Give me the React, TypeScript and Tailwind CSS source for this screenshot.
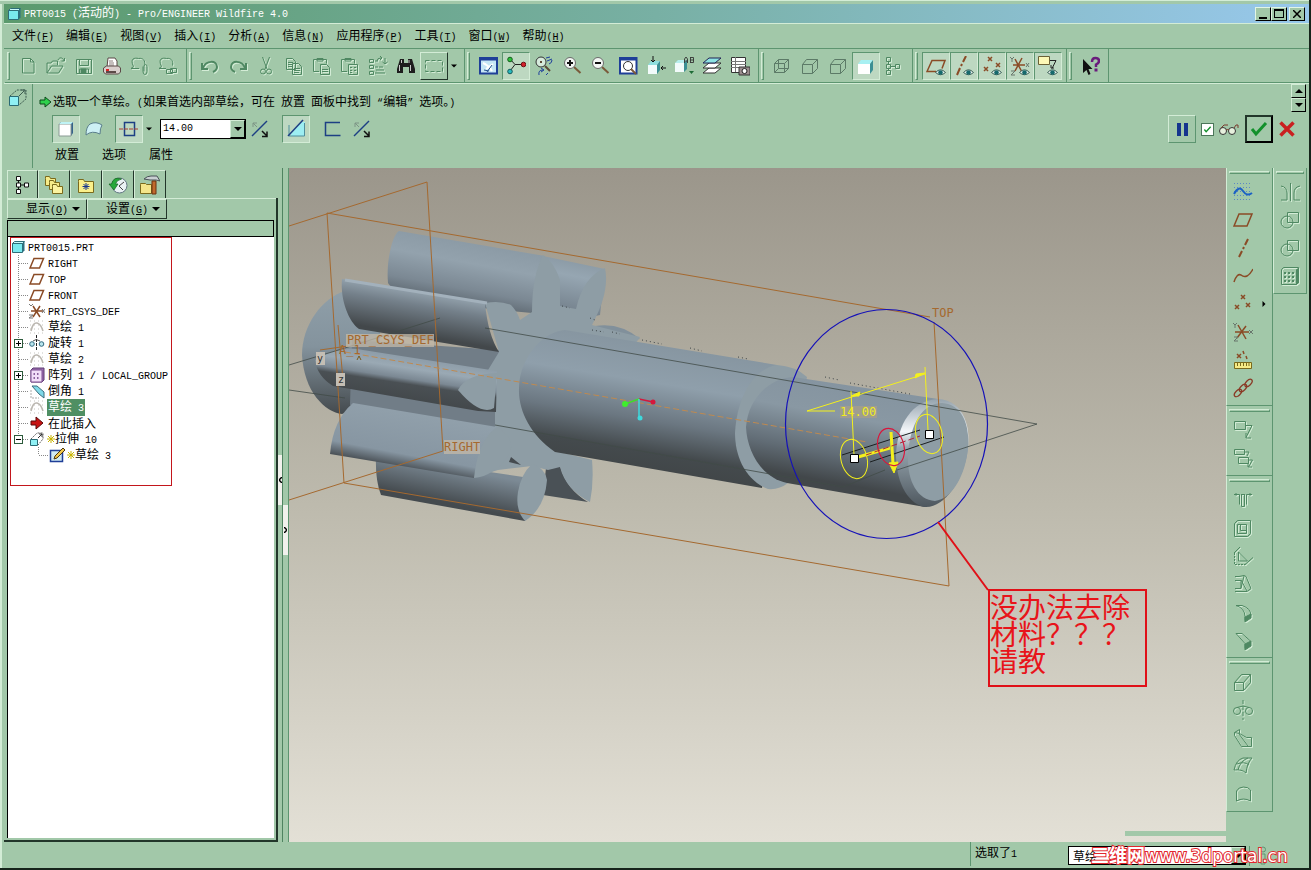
import type { ReactNode } from "react";

const DISABLED = "text-[#4f8862] drop-shadow-[1px_1px_0_#d3ecd6]";

function Mixed({ children }: { children: string }) {
  return (
    <span>
      {children.split(/([\x20-\x7e“”]+)/).map((part, i) =>
        /^[\x20-\x7e“”]/.test(part) ? (
          <span key={i} className="whitespace-pre font-['Liberation_Mono',monospace] text-[10px]">
            {part}
          </span>
        ) : (
          part
        ),
      )}
    </span>
  );
}

const eye = (
  <g>
    <path d="M9.500 16.500q5-5.500 10 0q-5 4.500-10 0" fill="#e8f1ec" stroke="#3d6258" />
    <circle cx="14.500" cy="16.500" r="2.300" fill="#16696c" stroke="none" />
  </g>
);

const lens = <path d="M12 11l6.500 6" stroke="#7a5a3a" strokeWidth="2" />;

const icons: Record<string, ReactNode> = {
  new: <path d="M4.500 2.500h8l3.500 3.500v11h-11.500zM12.500 2.500v3.500h3.500" />,
  open: <path d="M1 17v-10h4l1.500-2h5v4M1 17h11.500l4.500-7h-11.500zM12 4c1-3 5-3 6 1M18.500 2v3h-3" />,
  save: (
    <>
      <path d="M2.500 3.500h15v14h-15zM5.500 3.500v6h9v-6M5.500 17v-4h9v4" />
      <path d="M7 13h5v4h-5z" fill="currentColor" />
    </>
  ),
  print: (
    <>
      <path d="M5 11l1-9h7l2 3v6z" fill="#fff" stroke="#5c4a48" />
      <path d="M7 5h4M7 7h5M7 9h5" stroke="#8c7f7d" />
      <path d="M1.500 12l3-2h12l2 2v4l-2 2h-13l-2-2z" fill="#d9cfcd" stroke="#5c4a48" />
      <path d="M4 16h10" stroke="#5c4a48" strokeWidth="2" />
      <path d="M4 14h3" stroke="#d22" strokeWidth="2" />
    </>
  ),
  mail: <path d="M9 12.500h-8l2.500-2c-4-8 1-9 5-8c5-1 7 3 6 6M13 10.500v5q0 3 2 3t2-3v-5q0-2-1.500-2t-1.500 2v5" />,
  link: <path d="M8 12.500h-7l2.500-2c-4-8 1-9 5-8c5-1 7 3 6 7M8.500 13.500h6v4h-6zM12.500 12.500h6v4h-6z" />,
  undo: <path d="M2 7v6h6M3 12c3-8 14-8 14-1q0 3-4 5" strokeWidth="2" />,
  redo: <path d="M18 7v6h-6M17 12c-3-8-14-8-14-1q0 3 4 5" strokeWidth="2" />,
  cut: (
    <>
      <path d="M6.500 1l4.500 12M13.500 1l-4.500 12" />
      <circle cx="7" cy="15.500" r="2.500" />
      <circle cx="13" cy="15.500" r="2.500" />
    </>
  ),
  copy: <path d="M2.500 2.500h6l3 3v8h-9zM4 6.500h5M4 8.500h5M4 10.500h4M8.500 7.500h6l3 3v8h-9zM10 12.500h6M10 14.500h6M10 16.500h5" />,
  paste: <path d="M7 15.500h-5.500v-12h13v4M5 5v-2.500h6v2.500zM8.500 8.500h6l3 3v7h-9zM10 13.500h6M10 15.500h6" />,
  pasteSpecial: <path d="M7 15.500h-5.500v-12h13v4M5 5v-2.500h6v2.500zM8.500 8.500h9v10h-9zM10 11.500h2M14 11.500h2M10 14.500h2M14 14.500h2M10 16.500h2" />,
  regen: <path d="M1.500 3.500h4v3h-4zM1.500 9.500h4v3h-4zM1.500 15.500h4v3h-4zM7 5h3M7 11h3M7 17h10M8 14h8M9 5q0-3 4-3M12 0l2 2l-2 2M17 2v6M14.500 6l2.500 2l2.500-2M15 11h-4" />,
  find: (
    <>
      <path d="M4 3h4v4h4v-4h4l3 10v4h-6v-6h-6v6h-6v-4z" fill="#1d1d1d" stroke="none" />
      <path d="M3.500 9v6M14.500 9v6M5.500 4v3M13 4v3" stroke="#c9c9c9" />
    </>
  ),
  select: <path d="M1.500 4.500h17v11h-17z" strokeDasharray="4 2" />,
  repaint: (
    <>
      <path d="M2 2h17v15.500h-17z" fill="#c6e6f5" stroke="#1f3f98" strokeWidth="2" />
      <path d="M2 3h17" stroke="#1f3f98" strokeWidth="3" />
      <path d="M5 7q5 2 9 8M8 13l7-5" stroke="#fff" strokeWidth="2" />
      <path d="M9 16l5-7M6 14l5 1" stroke="#27518e" />
    </>
  ),
  spin: (
    <>
      <path d="M4 3l5 5.500h8M9 8.500l-5 6.500" stroke="#222" />
      <circle cx="4" cy="3.500" r="2.300" fill="#2bc23c" stroke="#165c1c" />
      <circle cx="17.500" cy="8.500" r="2.300" fill="#d3202c" stroke="#6e0f14" />
      <circle cx="4" cy="15.500" r="2.300" fill="#28b9bd" stroke="#145a5c" />
    </>
  ),
  viewMode: (
    <>
      <circle cx="7" cy="6" r="5" fill="#d6eadc" stroke="#333" />
      <path d="M7 5v2M11 10l5 5" stroke="#5c4a38" strokeWidth="2" />
      <path d="M12 2l4-1M13 5l5-2M15 8q3-1 3-4M5 19q-1-5 4-5M7 12l3 2l-3 2M12 19l2-2" stroke="#1e3f9b" />
    </>
  ),
  zoomIn: (
    <>
      {lens}
      <circle cx="8" cy="7" r="5.500" fill="#f3f7f4" stroke="#6b6b6b" />
      <path d="M5 7h6M8 4v6" stroke="#111" strokeWidth="2" />
    </>
  ),
  zoomOut: (
    <>
      {lens}
      <circle cx="8" cy="7" r="5.500" fill="#f3f7f4" stroke="#6b6b6b" />
      <path d="M5 7h6" stroke="#111" strokeWidth="2" />
    </>
  ),
  refit: (
    <>
      <path d="M2 2h16.500v15.500h-16.500z" fill="#fff" stroke="#1f3f98" strokeWidth="2" />
      <path d="M2 3h16" stroke="#1f3f98" strokeWidth="3" />
      <circle cx="10" cy="10" r="4.500" stroke="#333" />
      <path d="M13 13l5 5" stroke="#7a5a3a" strokeWidth="2" />
    </>
  ),
  orient: (
    <>
      <path d="M2 9h9v9h-9z" fill="#f2fbfb" stroke="none" />
      <path d="M2 9l3-4h9l-3 4z" fill="#8fdede" stroke="none" />
      <path d="M11 9l3-4v9l-3 4z" fill="#3b8f94" stroke="none" />
      <path d="M7 0v5M5 4l2 2l2-2M20 12h-5M17 10l-2 2l2 2" stroke="#111" />
    </>
  ),
  saved: (
    <>
      <path d="M1 7h9v9h-9z" fill="#f2fbfb" stroke="none" />
      <path d="M1 7l3-3h9l-3 3z" fill="#b7eeee" stroke="none" />
      <path d="M10 7l3-3v9l-3 3z" fill="#3b8f94" stroke="none" />
      <path d="M10.500 7v-4l1.500-2l1.500 2v4M10.500 5h3M16.500 1v6M16.500 1.500h3v5h-3M16.500 4h3" stroke="#333" strokeWidth=".9" />
      <path d="M15 15h5l-2.500 3z" fill="#1d6b35" stroke="none" />
    </>
  ),
  layers: (
    <>
      <path d="M1 17l6-5h12l-6 5z" fill="#fff" stroke="#333" />
      <path d="M1 12l6-5h12l-6 5z" fill="#fff" stroke="#333" />
      <path d="M1 7l6-5h12l-6 5z" fill="#8de3e3" stroke="#225" />
    </>
  ),
  viewMgr: (
    <>
      <path d="M1.500 1.500h14v15h-14z" fill="#fff" stroke="#333" />
      <path d="M1 5.500h15M1 8.500h15M1 11.500h15M5.500 1v15" stroke="#777" />
      <path d="M9 11h11v8h-11z" fill="#9d8f90" stroke="#333" />
      <circle cx="14.500" cy="15" r="2.500" fill="#fff" stroke="#222" />
    </>
  ),
  wire: <path d="M2.500 7.500h10v9h-10zM6.500 3.500h10v9h-10zM2.500 7.500l4-4M12.500 7.500l4-4M2.500 16.500l4-4M12.500 16.500l4-4" stroke="#5c7a67" />,
  hidden: <path d="M2.500 8.500h10v9h-10zM2.500 8.500l4-5h11v9l-5 5M12.500 8.500l5-5" stroke="#5c7a67" />,
  shaded: (
    <>
      <path d="M2 8h12v10h-12z" fill="#fff" stroke="none" />
      <path d="M2 8l3-4h12l-3 4z" fill="#a8f0f2" stroke="none" />
      <path d="M14 8l3-4v10l-3 4z" fill="#3b8f94" stroke="none" />
    </>
  ),
  tree: <path d="M2.500 1.500h4v4h-4zM2.500 8.500h4v4h-4zM2.500 14.500h4v4h-4zM11.500 8.500h4v4h-4zM4.500 6v2M4.500 12v2M7 10.500h4" />,
  plane: <path d="M6 4h13l-5 12h-13z" stroke="#8a4b26" strokeWidth="1.500" />,
  planeEye: (
    <>
      <path d="M10 15.500h-9l5-11h13l-3 8" stroke="#8a4b26" strokeWidth="1.500" />
      {eye}
    </>
  ),
  axis: <path d="M15 1l-3 6M11 9l-1 2M9 13l-3 6" stroke="#8a4b26" strokeWidth="2" />,
  axisEye: (
    <>
      <path d="M12 0l-3 6M8 8l-1 2M6 12l-3 7" stroke="#8a4b26" strokeWidth="2" />
      {eye}
    </>
  ),
  points: <path d="M8 1l4 4M12 1l-4 4M2 11l4 4M6 11l-4 4M13 9l4 4M17 9l-4 4" stroke="#8a4b26" strokeWidth="1.500" />,
  pointsEye: (
    <>
      <path d="M6 1l4 4M10 1l-4 4M2 11l4 4M6 11l-4 4M14 7l4 4M18 7l-4 4" stroke="#8a4b26" strokeWidth="1.500" />
      {eye}
    </>
  ),
  csys: (
    <>
      <path d="M2 10h14M5 3l8 14M13 4l-9 12" stroke="#8a4b26" strokeWidth="1.500" />
      <path d="M0 1l2 2l2-2M2 3v3M16 8l4 4M20 8l-4 4M1 15h4l-4 4h4" stroke="#68766c" />
    </>
  ),
  csysEye: (
    <>
      <path d="M3 9h12M5 3l7 13M12 2l-7 13" stroke="#8a4b26" strokeWidth="1.500" />
      <path d="M0 1l2 2l2-2M2 3v3M16 7l3 4M19 7l-3 4M1 15h4l-4 4h4" stroke="#68766c" />
      {eye}
    </>
  ),
  noteEye: (
    <>
      <path d="M.5 .500h11v8h-11z" fill="#fdf8b6" stroke="#6b6136" />
      <path d="M12 4.500h6l-4 8M13 9v3h3" stroke="#222" />
      {eye}
    </>
  ),
  help: (
    <>
      <path d="M3 3v14l3.500-3l2 5l2-1l-2-5h4z" fill="#111" stroke="none" />
      <path d="M12 6q0-4 3.500-4t3.500 3q0 2-3 3.500v2.500" stroke="#6a1b7c" strokeWidth="2.500" />
      <path d="M14.500 12.500h3v3h-3z" fill="#6a1b7c" stroke="none" />
    </>
  ),
  extrude: (
    <>
      <path d="M1.500 8.500h9v9h-9z" fill="#8ff0f4" stroke="#2a6a74" />
      <path d="M2 8l7-6h9v9l-7 6" stroke="#3d5c50" strokeDasharray="2 1" />
      <path d="M11 8l5-5M13 2h4v4" stroke="#3d5c50" />
    </>
  ),
  solid: (
    <>
      <path d="M3 5l2-2h12v11l-2 3h-12z" fill="#35618a" stroke="none" />
      <path d="M3 5h12v12h-12z" fill="#fff" stroke="#8a9a94" />
      <path d="M3 5l2-2h12l-2 2z" fill="#bff3f5" stroke="none" />
    </>
  ),
  surface: <path d="M2 16q0-8 4-11q6-3 12 1q-2 3-2 9q-8-4-14 1z" fill="#cdf0f4" stroke="#5b7f8c" />,
  symmetric: (
    <>
      <path d="M5.500 3.500h10v13h-10z" stroke="#1d3f84" strokeWidth="1.500" />
      <path d="M0 10h20" stroke="#a63d32" strokeDasharray="4 1" />
    </>
  ),
  flip: (
    <>
      <path d="M2 17l15-15" stroke="#1d3f84" strokeWidth="1.500" />
      <path d="M3 4l4 4M3 8v-4h4" stroke="#7d9485" />
      <path d="M12 12l5 5M17 12.500v5h-5" stroke="#111" strokeWidth="1.500" />
    </>
  ),
  removeMat: (
    <>
      <path d="M5 15l11-12h3v14h-14z" fill="#9deef2" stroke="none" />
      <path d="M3 6v11h15.500v-13" stroke="#4f8e9c" />
      <path d="M2 17l15-16" stroke="#1d3f84" strokeWidth="1.500" />
    </>
  ),
  thicken: <path d="M18 3.500h-14.500v13h15" stroke="#1d3f84" strokeWidth="1.500" />,
  glasses: (
    <>
      <circle cx="4" cy="12" r="3.500" fill="#e6f0dd" stroke="#333" />
      <circle cx="13" cy="12" r="3.500" fill="#e6f0dd" stroke="#333" />
      <path d="M7 11q1.500-1 3 0M2 9l3-3h4M15 9l2-3h2v3" stroke="#7a3b2c" />
    </>
  ),
  check: <path d="M3 10l4 5l10-11" stroke="#12902b" strokeWidth="3" />,
  cross: <path d="M3.500 3.500l13 13M16.500 3.500l-13 13" stroke="#c92020" strokeWidth="3.500" />,
  modelTree: <path d="M3.500 1.500h4v4h-4zM3.500 8h4v4h-4zM3.500 14.500h4v4h-4zM11.500 8h4v4h-4zM5.500 6v2M5.500 12v2M8 10h3" fill="#fff" stroke="#111" />,
  folders: (
    <>
      <path d="M1.500 3.500v-2h4l1 2h5v7h-10z" fill="#f6ec8a" stroke="#7a6a1c" />
      <path d="M5.500 7.500v-2h4l1 2h5v7h-10z" fill="#f6ec8a" stroke="#7a6a1c" />
      <path d="M8.500 11.500v-2h4l1 2h5v7h-10z" fill="#fbf3a0" stroke="#7a6a1c" />
    </>
  ),
  favorites: (
    <>
      <path d="M2.500 6.500v-2h5l1 2h9v11h-15z" fill="#fbf08a" stroke="#7a6a1c" />
      <path d="M10 8v7M6.500 11.500h7M7.500 9l5 5M12.500 9l-5 5" stroke="#15358e" />
    </>
  ),
  history: (
    <>
      <circle cx="11.500" cy="10.500" r="7.500" fill="#eaf2f4" stroke="#5f7480" />
      <path d="M11 11l5-4M11 11l4 4" stroke="#444" />
      <path d="M1 9l5 6l4-6h-2.500q1-4 6-5q-8-3-10 5z" fill="#27a83a" stroke="#10601d" strokeWidth=".7" />
    </>
  ),
  tools: (
    <>
      <path d="M.5 9.500v-1h5l1 1h5v9h-11z" fill="#f4e58a" stroke="#7a6a1c" />
      <path d="M4 4q3-3 7-3h6l3 5l-4-1h-6z" fill="#c9cfd2" stroke="#4a5358" />
      <path d="M12 6h4v13h-4z" fill="#c0692d" stroke="#6a3310" />
    </>
  ),
  sketch: (
    <>
      <path d="M1 1.500h18M1 5.500h18M1 9.500h18M1 13.500h18M1 17.500h18" stroke="#5c87c4" strokeDasharray="1 2" />
      <path d="M1 12q5-9 9-3t9 2" stroke="#1c62c4" strokeWidth="2" />
    </>
  ),
  curve: <path d="M1 16q3-9 7-7q6 5 12-6" stroke="#8a4b26" strokeWidth="1.500" />,
  analysisPt: (
    <>
      <path d="M4 4l4 4M8 4l-4 4M10 1l1 3M13 6l1 3" stroke="#8a4b26" strokeWidth="1.500" />
      <path d="M1.500 12.500h17v6h-17z" fill="#f5eb87" stroke="#7a6a1c" />
      <path d="M4.500 13v3M7.500 13v3M10.500 13v3M13.500 13v3M16 13v3" stroke="#7a6a1c" />
    </>
  ),
  chain: (
    <g stroke="#8a3a26" strokeWidth="1.300">
      <ellipse cx="5" cy="15" rx="4.500" ry="2.500" transform="rotate(-45 5 15)" />
      <ellipse cx="10" cy="10" rx="4.500" ry="2.500" transform="rotate(-45 10 10)" />
      <ellipse cx="15.500" cy="5" rx="4.500" ry="2.500" transform="rotate(-45 15.500 5)" />
    </g>
  ),
  annot: <path d="M1.500 1.500h11v8h-11zM13 5.500h6l-6 12M13 13v5h5" />,
  annots: <path d="M1.500 1.500h10v5h-10zM12 4h4l-2 4M5.500 9.500h10v6h-10zM16 12h3.500l-4 7M15 15v4h4" />,
  mirror: <path d="M10.500 1v18M1 4q6 1 6 7v7M20 4q-6 1-6 7v7M1 18h6M20 18h-6" />,
  merge: (
    <>
      <circle cx="7" cy="12" r="6" />
      <path d="M7.500 2.500h11v10h-11z" />
    </>
  ),
  pattern: (
    <>
      <path d="M1.500 3.500l2-2h15v15l-2 2h-15zM16.500 3.500v15" />
      <path d="M17 3h1.500v14h-1.500z" fill="currentColor" />
      <path d="M4 7h11M4 11h11M4 15h11" strokeWidth="2" strokeDasharray="2 2" />
    </>
  ),
  hole: <path d="M1 4.500h5.500v10M19 4.500h-5.500v10M8.500 4.500v12h3v-12M8 4.500h4M3 3v3M17 3v3" />,
  shell: <path d="M1.500 5.500l3-3h13v13l-3 3h-13zM4.500 6.500h9v9h-9zM7.500 6.500v6h6" />,
  rib: (
    <>
      <path d="M7 1l-6 6M12 18.500l8-7M5.500 6v9h9z" />
      <path d="M1.500 7v11.500h11" strokeDasharray="2 1" />
    </>
  ),
  draft: <path d="M2 2.500h4l5-1l2 1l5 12l-4 3h-12M2 6.500h6v8h-6M8 14l3-12M8 6l6 11" />,
  round: (
    <>
      <path d="M3 3.500h6q9 3 9 10M3 3.500q9 3 9 11v4" />
      <path d="M12 15l6-3v4l-6 4z" fill="currentColor" />
    </>
  ),
  chamfer: (
    <>
      <path d="M3 3.500h6l9 8M3 3.500l9 10v5" />
      <path d="M12 14l6-3v5l-6 4z" fill="currentColor" />
    </>
  ),
  extrudeOff: <path d="M1.500 10.500h9v8h-9zM1.500 10.500l7-8h9v8l-7 8M10.500 10.500l7-8" />,
  revolve: (
    <>
      <circle cx="4" cy="11" r="3.500" />
      <circle cx="16" cy="11" r="3.500" />
      <path d="M10 0v20" strokeDasharray="4 2" />
      <path d="M4 7.500q6-3 12 0" />
    </>
  ),
  sweep: <path d="M1.500 4.500l5-3v4l7 4h5v9h-10l-7-11zM6 6l9 12M1.500 4.500l5 1" />,
  boundary: <path d="M1 14q2-10 9-12h9q-5 5-6 15q-4-4-12-3zM5 14q2-9 10-12M4 8q7-3 12 1" />,
  style: <path d="M3.500 17v-10q2-4 7-4t7 3v11q-7-4-14 0z" />,
};

function Icon({ name, className = "size-5" }: { name: string; className?: string }) {
  return (
    <svg viewBox="0 0 20 20" fill="none" stroke="currentColor" className={`shrink-0 ${className}`} aria-hidden="true">
      {icons[name]}
    </svg>
  );
}

function ToolButton({ icon, off, pressed, raised }: { icon: string; off?: boolean; pressed?: boolean; raised?: boolean }) {
  const frame = pressed
    ? "border-t-[#5d9570] border-l-[#5d9570] border-r-[#d3ecd6] border-b-[#d3ecd6] bg-[#bdd8c1]"
    : raised
      ? "border-t-[#d3ecd6] border-l-[#d3ecd6] border-r-[#22362a] border-b-[#22362a]"
      : "border-transparent";
  return (
    <button type="button" aria-label={icon} className={`grid size-7 shrink-0 place-items-center border ${frame} ${off || raised ? "text-[#4f8862]" : "text-black"}`}>
      <Icon name={icon} className={off || raised ? `size-5 ${DISABLED}` : "size-5"} />
    </button>
  );
}

type Tool = [icon: string, state?: "off" | "pressed" | "raised"];

const toolGroups: Tool[][] = [
  [["new", "off"], ["open", "off"], ["save", "off"], ["print"], ["mail", "off"], ["link", "off"]],
  [["undo", "off"], ["redo", "off"], ["cut", "off"], ["copy", "off"], ["paste", "off"], ["pasteSpecial", "off"], ["regen", "off"], ["find"], ["select", "raised"]],
  [["repaint"], ["spin", "pressed"], ["viewMode"], ["zoomIn"], ["zoomOut"], ["refit"], ["orient"], ["saved"], ["layers"], ["viewMgr"]],
  [["wire"], ["hidden"], ["hidden"], ["shaded", "pressed"], ["tree", "off"]],
  [["planeEye", "pressed"], ["axisEye", "pressed"], ["pointsEye", "pressed"], ["csysEye", "pressed"], ["noteEye", "pressed"]],
  [["help"]],
];

const featureGroups: Tool[][] = [
  [["sketch"], ["plane"], ["axis"], ["curve"], ["points"], ["csys"], ["analysisPt"], ["chain"]],
  [["annot", "off"], ["annots", "off"]],
  [["hole", "off"], ["shell", "off"], ["rib", "off"], ["draft", "off"], ["round", "off"], ["chamfer", "off"]],
  [["extrudeOff", "off"], ["revolve", "off"], ["sweep", "off"], ["boundary", "off"], ["style", "off"]],
];

const editGroup: Tool[][] = [[["mirror", "off"], ["merge", "off"], ["merge", "off"], ["pattern", "off"]]];

const menus = [
  ["文件", "F"],
  ["编辑", "E"],
  ["视图", "V"],
  ["插入", "I"],
  ["分析", "A"],
  ["信息", "N"],
  ["应用程序", "P"],
  ["工具", "T"],
  ["窗口", "W"],
  ["帮助", "H"],
];

function Accel({ label, letter }: { label: string; letter: string }) {
  return (
    <>
      {label}
      <span className="font-['Liberation_Mono',monospace] text-[10px]">
        (<u>{letter}</u>)
      </span>
    </>
  );
}

function Caret({ className = "w-2" }: { className?: string }) {
  return (
    <svg viewBox="0 0 8 4" className={`h-1 shrink-0 ${className}`} aria-hidden="true">
      <path d="M0 0h8L4 4z" />
    </svg>
  );
}

function TitleBar() {
  const box = "grid h-[14px] w-4 place-items-center border border-t-[#e2f5e4] border-l-[#e2f5e4] border-r-black border-b-black bg-[#a2c8a9]";
  return (
    <header className="flex h-[19px] shrink-0 items-center gap-px bg-linear-to-r from-[#5b9a6d] via-[#78b0a4] to-[#98c8ec] pr-1 pl-[3px]">
      <TreeIcon name="part" />
      <h1 className="flex-1 text-white">
        <Mixed>PRT0015 (活动的) - Pro/ENGINEER Wildfire 4.0</Mixed>
      </h1>
      <div className="flex">
        <button type="button" aria-label="最小化" className={box}>
          <span className="mt-2 h-[2px] w-2 bg-black" />
        </button>
        <button type="button" aria-label="最大化" className={box}>
          <span className="h-[9px] w-[10px] border border-t-2 border-black" />
        </button>
        <button type="button" aria-label="关闭" className={`ml-[2px] ${box}`}>
          <svg viewBox="0 0 8 8" className="size-2" stroke="#000" strokeWidth="1.500" aria-hidden="true">
            <path d="M0 0l8 8M8 0l-8 8" />
          </svg>
        </button>
      </div>
    </header>
  );
}

function Toolbar() {
  return (
    <div className="flex h-[35px] shrink-0 border-b border-[#d3ecd6] pl-px">
      <div className="flex w-full border-b border-[#5d9570]">
        {toolGroups.map((group, g) => (
          <div key={g} className="flex items-center border-r border-[#5d9570] pr-1 pl-[2px]">
            <span className="mr-1 h-7 w-[3px] border border-t-[#d3ecd6] border-l-[#d3ecd6] border-r-[#5d9570] border-b-[#5d9570]" />
            {group.map(([icon, state], i) => (
              <ToolButton key={i} icon={icon} off={state === "off"} pressed={state === "pressed"} raised={state === "raised"} />
            ))}
            {g === 1 ? (
              <button type="button" aria-label="选取方式" className="grid h-7 w-3 place-items-center">
                <Caret className="w-[6px]" />
              </button>
            ) : null}
          </div>
        ))}
      </div>
    </div>
  );
}

function Dashboard() {
  const scroll = "grid h-[14px] w-[15px] place-items-center border border-t-[#d3ecd6] border-l-[#d3ecd6] border-r-black border-b-black";
  return (
    <section className="flex h-[84px] shrink-0">
      <div className="w-[29px] border-r border-[#5d9570] pt-1 pl-1">
        <Icon name="extrude" />
      </div>
      <div className="flex min-w-0 flex-1 flex-col">
        <div className="flex h-[31px] justify-between pr-[3px] pl-[6px]">
          <p className="mt-[10px] flex h-4 items-center gap-px whitespace-nowrap">
            <svg viewBox="0 0 13 12" className="h-3 w-[13px]" fill="#2ed14c" stroke="#0d4a1a" aria-hidden="true">
              <path d="M1 4h5V1l6 5-6 5V8H1z" />
            </svg>
            <Mixed>选取一个草绘。(如果首选内部草绘，可在 放置 面板中找到 “编辑” 选项。)</Mixed>
          </p>
          <div>
            <button type="button" aria-label="上移" className={scroll}>
              <Caret className="w-2 rotate-180" />
            </button>
            <button type="button" aria-label="下移" className={scroll}>
              <Caret />
            </button>
          </div>
        </div>
        <div className="flex h-7 items-center pr-2 pl-[19px]">
          <ToolButton icon="solid" pressed />
          <ToolButton icon="surface" />
          <div className="ml-[7px] flex items-center">
            <ToolButton icon="symmetric" pressed />
            <button type="button" aria-label="深度选项" className="grid h-7 w-3 place-items-center">
              <Caret className="w-[6px]" />
            </button>
          </div>
          <label className="ml-[5px] grid h-5 w-[86px] border border-black bg-white">
            <select aria-label="深度" className="col-start-1 row-start-1 appearance-none bg-transparent pl-[2px] font-['Liberation_Mono',monospace] text-[10px] outline-none">
              <option>14.00</option>
            </select>
            <span className="pointer-events-none col-start-1 row-start-1 grid w-[15px] place-items-center justify-self-end border border-t-[#d3ecd6] border-l-[#d3ecd6] border-r-black border-b-black bg-[#a2c8a9]">
              <Caret />
            </span>
          </label>
          <ToolButton icon="flip" />
          <div className="ml-2 flex gap-2">
            <ToolButton icon="removeMat" pressed />
            <ToolButton icon="thicken" />
          </div>
          <div className="ml-[2px] flex-1">
            <ToolButton icon="flip" />
          </div>
          <button type="button" aria-label="暂停" className="flex size-7 items-center justify-center gap-[3px] border border-t-[#d3ecd6] border-l-[#d3ecd6] border-r-[#5d9570] border-b-[#5d9570]">
            <span className="h-[13px] w-1 bg-[#15358e]" />
            <span className="h-[13px] w-1 bg-[#15358e]" />
          </button>
          <label className="ml-[5px] flex items-center gap-1">
            <span className="grid size-[13px] place-items-center">
              <input type="checkbox" defaultChecked aria-label="预览" className="col-start-1 row-start-1 size-[13px] appearance-none border border-[#4b7659] bg-white" />
              <Icon name="check" className="pointer-events-none col-start-1 row-start-1 size-[9px]" />
            </span>
            <Icon name="glasses" className="h-5 w-[22px]" />
          </label>
          <button type="button" aria-label="确定" className="ml-[5px] grid size-7 place-items-center border-2 border-t-[#22362a] border-l-[#22362a] border-r-black border-b-black">
            <Icon name="check" />
          </button>
          <ToolButton icon="cross" />
        </div>
        <nav className="flex h-[22px] items-center gap-[23px] pl-[22px]">
          {["放置", "选项", "属性"].map((tab) => (
            <button key={tab} type="button">
              {tab}
            </button>
          ))}
        </nav>
      </div>
    </section>
  );
}

const treeIcons: Record<string, ReactNode> = {
  part: (
    <>
      <path d="M1.500 4.500h10v9h-10z" fill="#79e9ee" stroke="#2e6d78" />
      <path d="M1.500 4.500l2-2h10l-2 2z" fill="#c9fafb" stroke="#2e6d78" />
      <path d="M11.500 4.500l2-2v9l-2 2z" fill="#2c7180" />
    </>
  ),
  plane: <path d="M5 3.500h9.500L10.500 13H1z" stroke="#8a4b26" strokeWidth="1.500" />,
  csys: (
    <>
      <path d="M2 8h12M4 3l7 11M11 3L4 14" stroke="#8a4b26" strokeWidth="1.500" />
      <path d="M0 1l2 2 2-2M13 6l3 4M16 6l-3 4M0 12h4l-4 3h4" stroke="#777" />
    </>
  ),
  curve: (
    <>
      <path d="M1 2h14M1 14h14M1 6h14M1 10h14" stroke="#c4c4bf" strokeDasharray="1 3" />
      <path d="M2 12q2-9 6-8t6 8" stroke="#bbb7b0" strokeWidth="1.500" />
    </>
  ),
  revolve: (
    <>
      <path d="M7.500 0v16" stroke="#222" strokeDasharray="3 1" />
      <circle cx="3" cy="9" r="2.300" fill="#b9e6ee" stroke="#336a80" />
      <circle cx="12.500" cy="9" r="2.300" fill="#b9e6ee" stroke="#336a80" />
      <path d="M4 6q3-3 7 0" stroke="#555" />
    </>
  ),
  pattern: (
    <>
      <path d="M2 3l2-2h11v12l-2 2H2z" fill="#9b6fb0" stroke="#5c3a70" />
      <path d="M2 3h11v12H2z" fill="#f1def8" stroke="#7d5092" />
      <path d="M4.500 7H11M4.500 11H11" stroke="#6a3a80" strokeWidth="1.500" strokeDasharray="1.500 2" />
    </>
  ),
  chamfer: (
    <>
      <path d="M2 7v8h8" stroke="#aaa" strokeDasharray="2 1" />
      <path d="M3 3h5l7 6v6l-5-4z" fill="#7fd9e8" stroke="#3d6d7c" />
    </>
  ),
  insert: <path d="M2 6h5V2l7 6-7 6v-4H2z" fill="#c81414" stroke="#5a0808" />,
  extrude: (
    <>
      <path d="M1.500 8.500h7v6h-7z" fill="#8ff0f4" stroke="#2a6a74" />
      <path d="M2 8l6-6h6v6l-5 6" stroke="#666" strokeDasharray="2 1" />
      <path d="M9 7l4-4M10 3h3v3" stroke="#333" />
    </>
  ),
  edit: (
    <>
      <path d="M1.500 3.500h12v11h-12z" fill="#cfeaf2" stroke="#1f3f98" strokeWidth="1.500" />
      <path d="M5 12l1-3 8-8 2 2-8 8z" fill="#f1c84c" stroke="#4a3510" />
    </>
  ),
};

function TreeIcon({ name }: { name: string }) {
  return (
    <svg viewBox="0 0 16 16" fill="none" className="size-4 shrink-0" aria-hidden="true">
      {treeIcons[name]}
    </svg>
  );
}

type Row = { label: string; icon: string; toggle?: "+" | "-"; selected?: boolean; pending?: boolean; last?: boolean };

const rows: Row[] = [
  { label: "RIGHT", icon: "plane" },
  { label: "TOP", icon: "plane" },
  { label: "FRONT", icon: "plane" },
  { label: "PRT_CSYS_DEF", icon: "csys" },
  { label: "草绘 1", icon: "curve" },
  { label: "旋转 1", icon: "revolve", toggle: "+" },
  { label: "草绘 2", icon: "curve" },
  { label: "阵列 1 / LOCAL_GROUP", icon: "pattern", toggle: "+" },
  { label: "倒角 1", icon: "chamfer" },
  { label: "草绘 3", icon: "curve", selected: true },
  { label: "在此插入", icon: "insert" },
  { label: "拉伸 10", icon: "extrude", toggle: "-", pending: true, last: true },
];

function Rail({ toggle, last }: { toggle?: "+" | "-"; last?: boolean }) {
  return (
    <svg viewBox="0 0 18 16" fill="none" shapeRendering="crispEdges" className="h-4 w-[18px] shrink-0" aria-hidden="true">
      <path d={last ? "M7.500 0v8M8 8.500h10" : "M7.500 0v16M8 8.500h10"} stroke="#888" strokeDasharray="1 1" />
      {toggle ? <path d="M3.500 4.500h8v8h-8z" fill="#fff" stroke="#2c5a3b" /> : null}
      {toggle ? <path d={toggle === "+" ? "M5 8.500h5M7.500 6v5" : "M5 8.500h5"} stroke="#000" /> : null}
    </svg>
  );
}

function Pending() {
  return (
    <svg viewBox="0 0 8 8" className="ml-[2px] size-2 shrink-0" stroke="#c9b400" aria-hidden="true">
      <path d="M0 4h8M4 0v8M1 1l6 6M7 1L1 7" />
    </svg>
  );
}

function ModelTree() {
  const tab = "grid place-items-center border-t border-r border-l border-t-[#d3ecd6] border-l-[#d3ecd6] border-r-[#22362a]";
  const menu = "flex h-5 w-20 items-center justify-center gap-1 border border-t-[#d3ecd6] border-l-[#d3ecd6] border-r-[#22362a] border-b-[#22362a] pl-3";
  return (
    <aside className="flex w-[274px] shrink-0 flex-col">
      <div className="flex h-[30px] pt-[2px] pl-[3px]">
        <button type="button" aria-label="模型树" className={`w-[31px] ${tab}`}>
          <Icon name="modelTree" />
        </button>
        {["folders", "favorites", "history", "tools"].map((name) => (
          <button key={name} type="button" aria-label={name} className={`w-8 ${tab}`}>
            <Icon name={name} />
          </button>
        ))}
      </div>
      <div className="flex min-h-0 flex-1 flex-col border-r-2 border-b-2 border-[#22362a] pl-[3px]">
        <div className="flex h-[22px] shrink-0 border-t border-[#d3ecd6]">
          <button type="button" className={menu}>
            <span>
              <Accel label="显示" letter="O" />
            </span>
            <Caret />
          </button>
          <button type="button" className={menu}>
            <span>
              <Accel label="设置" letter="G" />
            </span>
            <Caret />
          </button>
        </div>
        <div className="mr-[2px] mb-[2px] flex min-h-0 flex-1 flex-col border-l border-black">
          <div className="h-[17px] shrink-0 border border-l-0 border-black" />
          <div className="min-h-0 flex-1 overflow-hidden bg-white pl-[2px]">
            <ul className="h-[249px] w-[162px] border border-[#c3161c] pt-px">
              <li>
                <div className="flex h-4 items-center gap-px whitespace-nowrap">
                  <TreeIcon name="part" />
                  <Mixed>PRT0015.PRT</Mixed>
                </div>
                <ul>
                  {rows.map((row) => (
                    <li key={row.label} className="flex h-4 items-center whitespace-nowrap">
                      <Rail toggle={row.toggle} last={row.last} />
                      <TreeIcon name={row.icon} />
                      {row.pending ? <Pending /> : null}
                      <span className={row.selected ? "ml-[2px] bg-[#4f8f63] px-px leading-[14px] text-white" : row.pending ? "" : "ml-[3px]"}>
                        <Mixed>{row.label}</Mixed>
                      </span>
                    </li>
                  ))}
                  <li className="flex h-4 items-center whitespace-nowrap pl-5">
                    <Rail last />
                    <TreeIcon name="edit" />
                    <Pending />
                    <Mixed>草绘 3</Mixed>
                  </li>
                </ul>
              </li>
            </ul>
          </div>
        </div>
      </div>
    </aside>
  );
}

function Splitter() {
  return (
    <div className="flex w-[11px] shrink-0 border-r border-[#5d9570]">
      <div className="flex w-[5px] flex-col border-r border-[#4f8360]">
        <button type="button" aria-label="折叠树" className="mt-[287px] grid h-[50px] place-items-center bg-[#f1f1ec]">
          <svg viewBox="0 0 3 6" className="h-[6px] w-[3px]" fill="none" stroke="#000" strokeWidth="1.500" aria-hidden="true">
            <path d="M3 0L0 3l3 3" />
          </svg>
        </button>
      </div>
      <div className="flex w-[5px] flex-col">
        <button type="button" aria-label="展开树" className="mt-[337px] grid h-[50px] place-items-center bg-[#f1f1ec]">
          <svg viewBox="0 0 3 6" className="h-[6px] w-[3px]" fill="none" stroke="#000" strokeWidth="1.500" aria-hidden="true">
            <path d="M0 0l3 3-3 3" />
          </svg>
        </button>
      </div>
    </div>
  );
}

const FACE = "#8e9da5";

// Coordinates are window pixels, offset by the viewBox origin.
function ModelView() {
  return (
    <svg viewBox="289 168 937 674" preserveAspectRatio="xMinYMin slice" className="size-full" fill="none" role="img" aria-label="PRT0015">
      <defs>
        <linearGradient id="sky" x2="0" y2="1">
          <stop stopColor="#9b968b" />
          <stop offset=".5" stopColor="#bdbaad" />
          <stop offset="1" stopColor="#e3e0d6" />
        </linearGradient>
        <linearGradient id="disc" x2="0" y2="1">
          <stop stopColor="#8f9fa9" />
          <stop offset=".45" stopColor="#84939d" />
          <stop offset="1" stopColor="#444a4e" />
        </linearGradient>
        <linearGradient id="top" gradientUnits="userSpaceOnUse" x1="470" y1="243" x2="458" y2="308">
          <stop stopColor="#8c9ba6" />
          <stop offset=".3" stopColor="#93a2ad" />
          <stop offset=".7" stopColor="#7b8893" />
          <stop offset="1" stopColor="#58626a" />
        </linearGradient>
        <linearGradient id="lobe" gradientUnits="userSpaceOnUse" x1="575" y1="260" x2="565" y2="312">
          <stop stopColor="#8b9aa5" />
          <stop offset=".3" stopColor="#96a6b2" />
          <stop offset="1" stopColor="#74818c" />
        </linearGradient>
        <linearGradient id="dark" gradientUnits="userSpaceOnUse" x1="425" y1="290" x2="416" y2="343">
          <stop stopColor="#98a7b2" />
          <stop offset=".3" stopColor="#74808a" />
          <stop offset=".85" stopColor="#43484b" />
        </linearGradient>
        <linearGradient id="mid" gradientUnits="userSpaceOnUse" x1="415" y1="350" x2="407" y2="403">
          <stop stopColor="#8594a0" />
          <stop offset=".35" stopColor="#9aa9b4" />
          <stop offset=".55" stopColor="#7b8893" />
          <stop offset=".65" stopColor="#4a5054" />
          <stop offset="1" stopColor="#42474a" />
        </linearGradient>
        <linearGradient id="low" gradientUnits="userSpaceOnUse" x1="420" y1="412" x2="409" y2="470">
          <stop stopColor="#91a0ab" />
          <stop offset=".75" stopColor="#8796a2" />
          <stop offset="1" stopColor="#454b50" />
        </linearGradient>
        <linearGradient id="bottom" gradientUnits="userSpaceOnUse" x1="455" y1="468" x2="446" y2="512">
          <stop stopColor="#7c8a95" />
          <stop offset=".8" stopColor="#444a4e" />
        </linearGradient>
        <linearGradient id="shaft" gradientUnits="userSpaceOnUse" x1="660" y1="345" x2="640" y2="470">
          <stop stopColor="#8796a1" />
          <stop offset=".3" stopColor="#8f9fab" />
          <stop offset=".6" stopColor="#6b7781" />
          <stop offset=".85" stopColor="#444a4d" />
          <stop offset="1" stopColor="#414648" />
        </linearGradient>
        <linearGradient id="tip" gradientUnits="userSpaceOnUse" x1="860" y1="385" x2="840" y2="495">
          <stop stopColor="#8594a0" />
          <stop offset=".3" stopColor="#8998a3" />
          <stop offset=".65" stopColor="#616c75" />
          <stop offset=".9" stopColor="#42474a" />
        </linearGradient>
        <linearGradient id="edge" x2="0" y2="1">
          <stop stopColor="#95a3ad" />
          <stop offset=".3" stopColor="#f4f7fa" />
          <stop offset=".45" stopColor="#97a6b0" />
          <stop offset="1" stopColor="#4e575e" />
        </linearGradient>
      </defs>
      <path d="M289 168h937v674H289z" fill="url(#sky)" />

      <path d="M345 291C322 298 302 325 302 355C304 392 325 412 342 414L380 400V291z" fill="url(#disc)" />
      <path d="M352 340L500 350V432L350 405z" fill="#717d87" />
      <path d="M543 256L605 269L600 315L532 330z" fill="url(#lobe)" />
      <path d="M399 231C392 235 386 262 388 283L400 300L532 313L545 256z" fill="url(#top)" />
      <path d="M595 326Q620 322 640 339L600 345z" fill="#81909b" />
      <path d="M546 468L560 466Q567 490 588 502L543 495z" fill="#4a5156" />
      <path
        d="M485 303Q500 300 511 305Q517 311 520 320L532 312Q532 276 543 255Q554 262 560 280L560 306L576 309Q583 277 605 268Q610 292 592 325L640 337L560 452L592 460Q594 482 590 502Q566 490 560 467L548 470L532 466L498 470L472 478L495 426V395L465 390L485 375L499 352z"
        fill={FACE}
      />
      <path d="M342 279L485 303Q488 335 499 352L359 329C349 322 340 300 342 279z" fill="url(#dark)" />
      <path d="M345 280L487 303" stroke="#a3b1bc" strokeWidth="3" />
      <path d="M315 360Q340 345 363 350L497 371L496 412L478 411L333 386Q317 376 315 360z" fill="url(#mid)" />
      <path d="M458 390Q466 374 497 373L494 408Q480 416 458 390z" fill={FACE} />
      <path d="M376 455L530 478L525 521L381 495Q375 480 376 455z" fill="url(#bottom)" />
      <path d="M532 464Q545 468 547 480Q545 508 525 521Q515 510 518 492Q521 474 532 464z" fill={FACE} />
      <path d="M353 403L497 427L474 478L330 454Q333 420 353 403z" fill="url(#low)" />
      <path d="M497 427Q518 440 508 456Q494 476 474 478Q478 440 497 427z" fill={FACE} />
      <path d="M511 457l10 8-12-3z" fill="#454b4f" />

      <path d="M565 330L777 365L762 488L555 452C530 435 518 410 519 388C520 355 545 331 565 330z" fill="url(#shaft)" />
      <path d="M777 365Q795 366 807 377L788 483Q779 490 768 489C745 480 735 456 735 433C737 395 755 368 777 365z" fill={FACE} />
      <path d="M793 377L938 399L925 507L787 483C762 478 747 452 746 427C748 398 770 378 793 377z" fill="url(#tip)" />
      <path d="M938 399C965 400 972 430 967 455C962 480 945 508 925 507C910 505 896 485 896 455C897 425 912 400 938 399z" fill="url(#edge)" />
      <path d="M942 403C962 404 970 425 968 447C966 475 952 499 935 501C918 500 907 482 908 455C910 425 922 403 942 403z" fill={FACE} />
      <path d="M562 306l8 2M590 318l5 2M592 330l12 2M612 332l8 2M642 340l20 4M690 348l12 3M738 357l10 2M825 377l14 3M850 383l60 11" stroke="#3d4447" strokeDasharray="1 3" />

      <g stroke="#414b47">
        <path d="M485 328L1037 424L897 470M289 365L345 348L440 318M289 390L345 398M495 425L843 487L885 470" strokeWidth=".8" />
        <path d="M842 455L920 430M870 462L944 437" stroke="#1b1f20" />
      </g>
      <g stroke="#a5692f">
        <path d="M289 226L427 182L443 451L289 500" />
        <path d="M327 213L930 317M934 322L949 586L344 483L327 213" />
        <path d="M345 352L867 442" stroke="#bf8a50" strokeDasharray="6 3" />
        <path d="M320 350l28-4M338 325l5 55" />
      </g>

      <g fontFamily="'DejaVu Sans Mono', monospace" fontSize="12">
        <path d="M346 334h88v13h-88zM444 440h36v14h-36z" fill="#c4b9a8" opacity=".75" />
        <g fill="#a5692f">
          <text x="339" y="354">A_1</text>
          <text x="347" y="344">PRT_CSYS_DEF</text>
          <text x="444" y="451">RIGHT</text>
          <text x="932" y="317">TOP</text>
        </g>
        <path d="M316 352h9v13h-9zM336 373h9v13h-9z" fill="#c4beb4" />
        <g fill="#333" fontSize="10">
          <text x="317" y="362">y</text>
          <text x="338" y="383">z</text>
        </g>
        <path d="M357 360l2-4 2 4" stroke="#7a5a1a" />
        <path d="M840 406h37v12h-37z" fill="#a59f8c" opacity=".8" />
        <text x="840" y="416" fill="#f0ec20">
          14.00
        </text>
      </g>

      <path d="M639 399L653 402" stroke="#d5183c" strokeWidth="1.500" />
      <path d="M639 399L625 404" stroke="#3fdc2c" strokeWidth="1.500" />
      <path d="M639 399V418" stroke="#3ed9dc" strokeWidth="1.500" />
      <circle cx="653" cy="402" r="2.500" fill="#d5183c" />
      <circle cx="625" cy="404" r="3" fill="#3fee2c" />
      <circle cx="640" cy="418" r="2.500" fill="#3ed9dc" />

      <g stroke="#f4f01c">
        <path d="M835 411H807L925 374M925 367L928 430M851 391L854 455" />
        <path d="M851 396l9-4-1 4zM915 378l10-5-9 1z" fill="#f4f01c" />
        <ellipse cx="854" cy="459" rx="13" ry="20" transform="rotate(-15 854 459)" />
        <ellipse cx="929" cy="434" rx="13" ry="20" transform="rotate(-15 929 434)" />
        <path d="M858 457L890 448" strokeWidth="3" />
        <path d="M891 432L893 464" strokeWidth="3" />
        <path d="M889 463l9-1-4 11z" fill="#f4f01c" />
      </g>
      <ellipse cx="891" cy="447" rx="13" ry="19" transform="rotate(-15 891 447)" stroke="#d9163c" strokeWidth="1.200" />
      <path d="M866 455L920 436" stroke="#b0283c" strokeDasharray="6 3" />
      <path d="M850.500 454.500h8v8h-8zM925.500 430.500h8v8h-8z" fill="#fff" stroke="#000" />

      <ellipse cx="886.500" cy="424" rx="101" ry="114.500" stroke="#1511b8" strokeWidth="1.200" />
      <g stroke="#e01018" strokeWidth="2">
        <path d="M938 522L988 590M989 590h157v96H989z" />
      </g>
      <text fill="#e8141a" fontFamily="'Noto Sans CJK SC', sans-serif" fontSize="28" fontWeight="400">
        <tspan x="990" y="618">
          没办法去除
        </tspan>
        <tspan x="990" y="645">
          材料？？？
        </tspan>
        <tspan x="990" y="672">
          请教
        </tspan>
      </text>
      <path d="M1125 831h101v5h-101z" fill="#a2c8a9" />
    </svg>
  );
}

function SideTools({ groups, flyout, className }: { groups: Tool[][]; flyout?: string; className: string }) {
  return (
    <div className={`shrink-0 ${className}`}>
      {groups.map((group, g) => (
        <div key={g} className="flex flex-col border-r border-b border-l border-l-[#d3ecd6] border-r-[#5d9570] border-b-[#5d9570] px-[2px] pt-[3px] pb-[3px]">
          <span className="mb-1 h-[3px] border border-t-[#d3ecd6] border-l-[#d3ecd6] border-r-[#5d9570] border-b-[#5d9570]" />
          {group.map(([icon, state], i) => (
            <div key={i} className="flex items-center">
              <ToolButton icon={icon} off={state === "off"} />
              {icon === flyout ? <Caret className="ml-1 w-[6px] -rotate-90" /> : null}
            </div>
          ))}
        </div>
      ))}
    </div>
  );
}

function StatusBar() {
  return (
    <footer className="flex h-[26px] shrink-0 items-start justify-end">
      <p className="h-6 w-[98px] border-l border-[#5d9570] pl-1 leading-5">
        <Mixed>选取了1</Mixed>
      </p>
      <div className="relative mt-1 h-[19px]">
        <div className="flex">
          <label className="grid h-[19px] w-[178px] border border-black bg-white">
            <select aria-label="过滤器" className="col-start-1 row-start-1 appearance-none bg-transparent pl-1 text-xs leading-4 outline-none">
              <option>草绘</option>
            </select>
            <span className="pointer-events-none col-start-1 row-start-1 grid w-[14px] place-items-center justify-self-end border border-t-[#d3ecd6] border-l-[#d3ecd6] border-r-black border-b-black bg-[#a2c8a9]">
              <Caret />
            </span>
          </label>
          <svg viewBox="0 0 63 20" className="h-5 w-[63px]" fill="none" stroke="#5d9570" aria-hidden="true">
            <path d="M3.500 0v20M15 8h4v10h-4z" />
            <circle cx="17" cy="3.500" r="2.500" />
          </svg>
        </div>
        <span className="pointer-events-none absolute top-[2px] left-[23px] whitespace-nowrap font-['DejaVu_Sans','Noto_Sans_CJK_SC',sans-serif] text-lg leading-4 font-bold text-white [-webkit-text-stroke:2px_#e2262c] [paint-order:stroke_fill]">
          三维网<span className="text-[17px] font-normal">www.3dportal.cn</span>
        </span>
      </div>
    </footer>
  );
}

export default function App() {
  return (
    <div className="flex h-screen flex-col overflow-hidden border-r-2 border-b-2 border-[#16241b] bg-[#a2c8a9] font-['Noto_Sans_CJK_SC',sans-serif] text-xs leading-4 text-black">
      <div className="h-1 shrink-0 border-t border-[#d3ecd6]" />
      <div className="flex min-h-0 flex-1 flex-col border-l-2 border-[#d3ecd6] pl-[2px]">
        <TitleBar />
        <nav className="flex h-[26px] shrink-0 items-center gap-3 border-t border-b border-t-[#d3ecd6] border-b-[#5d9570] pl-2">
          {menus.map(([label, letter]) => (
            <button key={label} type="button" className="whitespace-nowrap">
              <Accel label={label} letter={letter} />
            </button>
          ))}
        </nav>
        <Toolbar />
        <Dashboard />
        <main className="flex min-h-0 flex-1">
          <ModelTree />
          <Splitter />
          <div className="min-w-0 flex-1 overflow-hidden">
            <ModelView />
          </div>
          <SideTools groups={featureGroups} flyout="points" className="w-[47px]" />
          <SideTools groups={editGroup} className="mr-[2px] w-[34px]" />
        </main>
        <StatusBar />
      </div>
    </div>
  );
}
